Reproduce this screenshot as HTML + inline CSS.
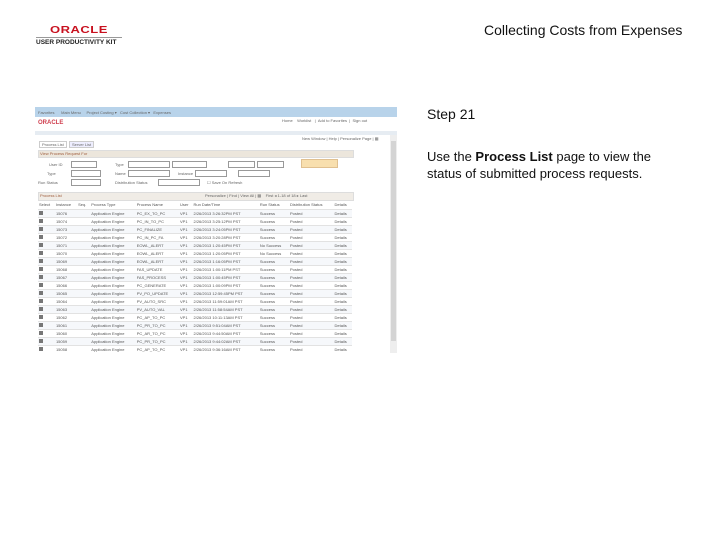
<!DOCTYPE html>
<html><head><style>
body{margin:0;width:720px;height:540px;background:#fff;font-family:"Liberation Sans",sans-serif;position:relative;overflow:hidden}
.a{position:absolute}
.t{font-size:4px;color:#666;white-space:nowrap}
table{border-collapse:collapse}
td{font-size:4px;color:#555;height:7px;padding:0 1px;border-bottom:1px solid #e2e2e2;white-space:nowrap}
tr:nth-child(even) td{background:#f6f8fb}
.cb{display:inline-block;width:4px;height:4px;background:#777}
.in{position:absolute;height:5px;border:1px solid #999;background:#fff}
</style></head><body>
<div class="a" style="left:484px;top:22px;font-size:14px;color:#111">Collecting Costs from Expenses</div>
<div class="a" style="left:50px;top:22px;font-size:13px;font-weight:bold;color:#c8101e;letter-spacing:0.5px;transform:scaleY(0.8)">ORACLE</div>
<div class="a" style="left:36px;top:37px;width:86px;height:1px;background:#999"></div>
<div class="a" style="left:36px;top:39px;font-size:6.5px;font-weight:bold;color:#222">USER PRODUCTIVITY KIT</div>

<div class="a" style="left:427px;top:106px;font-size:14px;color:#111">Step 21</div>
<div class="a" style="left:427px;top:148px;font-size:13px;line-height:17px;color:#111">Use the <b>Process List</b> page to view the<br>status of submitted process requests.</div>

<div class="a" style="left:35px;top:107px;width:362px;height:246px;background:#fff;overflow:hidden">
 <div class="a" style="left:0;top:0;width:362px;height:10px;background:#b8d3ea"></div>
 <div class="a t" style="left:3px;top:3px">Favorites &nbsp;&nbsp;&nbsp;&nbsp; Main Menu &nbsp;&nbsp;&nbsp; Project Costing ▾ &nbsp; Cost Collection ▾ &nbsp; Expenses</div>
 <div class="a" style="left:0;top:10px;width:362px;height:14px;background:#fff"></div>
 <div class="a" style="left:3px;top:13px;font-size:6px;font-weight:bold;color:#d04050">ORACLE</div>
 <div class="a t" style="left:247px;top:11px">Home &nbsp;&nbsp; Worklist &nbsp; | &nbsp;Add to Favorites &nbsp;| &nbsp;Sign out</div>
 <div class="a" style="left:0;top:24px;width:362px;height:4px;background:#e6ecf2"></div>
 <div class="a t" style="left:267px;top:29px">New Window | Help | Personalize Page | ▦</div>
 <div class="a" style="left:355px;top:28px;width:7px;height:218px;background:#eee"></div>
 <div class="a" style="left:356px;top:34px;width:5px;height:200px;background:#d4d4d4"></div>
 <div class="a t" style="left:4px;top:34px;border:1px solid #ccc;padding:0 2px;background:#fff">Process List</div>
 <div class="a t" style="left:34px;top:34px;border:1px solid #ccc;padding:0 2px;background:#eef">Server List</div>
 <div class="a" style="left:3px;top:43px;width:314px;height:6px;background:#ece6dc;border:1px solid #ddd"></div>
 <div class="a t" style="left:5px;top:44px;color:#a06040">View Process Request For</div>
 <div class="a t" style="left:14px;top:55px">User ID</div><div class="in" style="left:36px;top:54px;width:24px"></div>
 <div class="a t" style="left:12px;top:64px">Type</div><div class="in" style="left:36px;top:63px;width:28px"></div>
 <div class="a t" style="left:3px;top:73px">Run Status</div><div class="in" style="left:36px;top:72px;width:28px"></div>
 <div class="a t" style="left:80px;top:55px">Type</div><div class="in" style="left:93px;top:54px;width:40px"></div>
 <div class="in" style="left:137px;top:54px;width:33px"></div>
 <div class="a t" style="left:80px;top:64px">Name</div><div class="in" style="left:93px;top:63px;width:40px"></div>
 <div class="a t" style="left:143px;top:64px">Instance</div><div class="in" style="left:160px;top:63px;width:30px"></div>
 <div class="in" style="left:203px;top:63px;width:30px"></div>
 <div class="a t" style="left:80px;top:73px">Distribution Status</div><div class="in" style="left:123px;top:72px;width:40px"></div>
 <div class="a t" style="left:172px;top:73px">☐ Save On Refresh</div>
 <div class="in" style="left:193px;top:54px;width:25px"></div><div class="in" style="left:222px;top:54px;width:25px"></div>
 <div class="a" style="left:266px;top:52px;width:35px;height:7px;background:#f8dfae;border:1px solid #e0c090"></div>
 <div class="a" style="left:3px;top:85px;width:314px;height:7px;background:#f0ece6;border:1px solid #ddd"></div>
 <div class="a t" style="left:5px;top:86px;color:#a06040">Process List</div>
 <div class="a t" style="left:170px;top:86px">Personalize | Find | View All | ▦ &nbsp;&nbsp; First ◂ 1-18 of 18 ▸ Last</div>
 <table class="a" style="left:3px;top:93px;width:314px">
  <tr><td style="height:9px">Select</td><td>Instance</td><td>Seq.</td><td>Process Type</td><td>Process Name</td><td>User</td><td>Run Date/Time</td><td>Run Status</td><td>Distribution Status</td><td>Details</td></tr>
  <tr><td><span class="cb"></span></td><td>15076</td><td></td><td>Application Engine</td><td>PC_EX_TO_PC</td><td>VP1</td><td>2/26/2013 3:26:32PM PST</td><td>Success</td><td>Posted</td><td>Details</td></tr>
  <tr><td><span class="cb"></span></td><td>15074</td><td></td><td>Application Engine</td><td>PC_IN_TO_PC</td><td>VP1</td><td>2/26/2013 3:25:12PM PST</td><td>Success</td><td>Posted</td><td>Details</td></tr>
  <tr><td><span class="cb"></span></td><td>15073</td><td></td><td>Application Engine</td><td>PC_FINALIZE</td><td>VP1</td><td>2/26/2013 3:24:05PM PST</td><td>Success</td><td>Posted</td><td>Details</td></tr>
  <tr><td><span class="cb"></span></td><td>15072</td><td></td><td>Application Engine</td><td>PC_IN_PC_FA</td><td>VP1</td><td>2/26/2013 3:20:28PM PST</td><td>Success</td><td>Posted</td><td>Details</td></tr>
  <tr><td><span class="cb"></span></td><td>15071</td><td></td><td>Application Engine</td><td>EOWL_ALERT</td><td>VP1</td><td>2/26/2013 1:20:45PM PST</td><td>No Success</td><td>Posted</td><td>Details</td></tr>
  <tr><td><span class="cb"></span></td><td>15070</td><td></td><td>Application Engine</td><td>EOWL_ALERT</td><td>VP1</td><td>2/26/2013 1:20:05PM PST</td><td>No Success</td><td>Posted</td><td>Details</td></tr>
  <tr><td><span class="cb"></span></td><td>15069</td><td></td><td>Application Engine</td><td>EOWL_ALERT</td><td>VP1</td><td>2/26/2013 1:16:05PM PST</td><td>Success</td><td>Posted</td><td>Details</td></tr>
  <tr><td><span class="cb"></span></td><td>15068</td><td></td><td>Application Engine</td><td>FAS_UPDATE</td><td>VP1</td><td>2/26/2013 1:00:11PM PST</td><td>Success</td><td>Posted</td><td>Details</td></tr>
  <tr><td><span class="cb"></span></td><td>15067</td><td></td><td>Application Engine</td><td>FAS_PROCESS</td><td>VP1</td><td>2/26/2013 1:00:45PM PST</td><td>Success</td><td>Posted</td><td>Details</td></tr>
  <tr><td><span class="cb"></span></td><td>15066</td><td></td><td>Application Engine</td><td>PC_GENERATE</td><td>VP1</td><td>2/26/2013 1:00:09PM PST</td><td>Success</td><td>Posted</td><td>Details</td></tr>
  <tr><td><span class="cb"></span></td><td>15065</td><td></td><td>Application Engine</td><td>PV_PO_UPDATE</td><td>VP1</td><td>2/26/2013 12:59:45PM PST</td><td>Success</td><td>Posted</td><td>Details</td></tr>
  <tr><td><span class="cb"></span></td><td>15064</td><td></td><td>Application Engine</td><td>PV_AUTO_SRC</td><td>VP1</td><td>2/26/2013 11:59:01AM PST</td><td>Success</td><td>Posted</td><td>Details</td></tr>
  <tr><td><span class="cb"></span></td><td>15063</td><td></td><td>Application Engine</td><td>PV_AUTO_VAL</td><td>VP1</td><td>2/26/2013 11:58:54AM PST</td><td>Success</td><td>Posted</td><td>Details</td></tr>
  <tr><td><span class="cb"></span></td><td>15062</td><td></td><td>Application Engine</td><td>PC_AP_TO_PC</td><td>VP1</td><td>2/26/2013 10:11:13AM PST</td><td>Success</td><td>Posted</td><td>Details</td></tr>
  <tr><td><span class="cb"></span></td><td>15061</td><td></td><td>Application Engine</td><td>PC_PR_TO_PC</td><td>VP1</td><td>2/26/2013 9:51:04AM PST</td><td>Success</td><td>Posted</td><td>Details</td></tr>
  <tr><td><span class="cb"></span></td><td>15060</td><td></td><td>Application Engine</td><td>PC_AR_TO_PC</td><td>VP1</td><td>2/26/2013 9:44:50AM PST</td><td>Success</td><td>Posted</td><td>Details</td></tr>
  <tr><td><span class="cb"></span></td><td>15059</td><td></td><td>Application Engine</td><td>PC_PR_TO_PC</td><td>VP1</td><td>2/26/2013 9:44:02AM PST</td><td>Success</td><td>Posted</td><td>Details</td></tr>
  <tr><td><span class="cb"></span></td><td>15058</td><td></td><td>Application Engine</td><td>PC_AP_TO_PC</td><td>VP1</td><td>2/26/2013 9:36:16AM PST</td><td>Success</td><td>Posted</td><td>Details</td></tr>
 </table>
</div>
</body></html>
